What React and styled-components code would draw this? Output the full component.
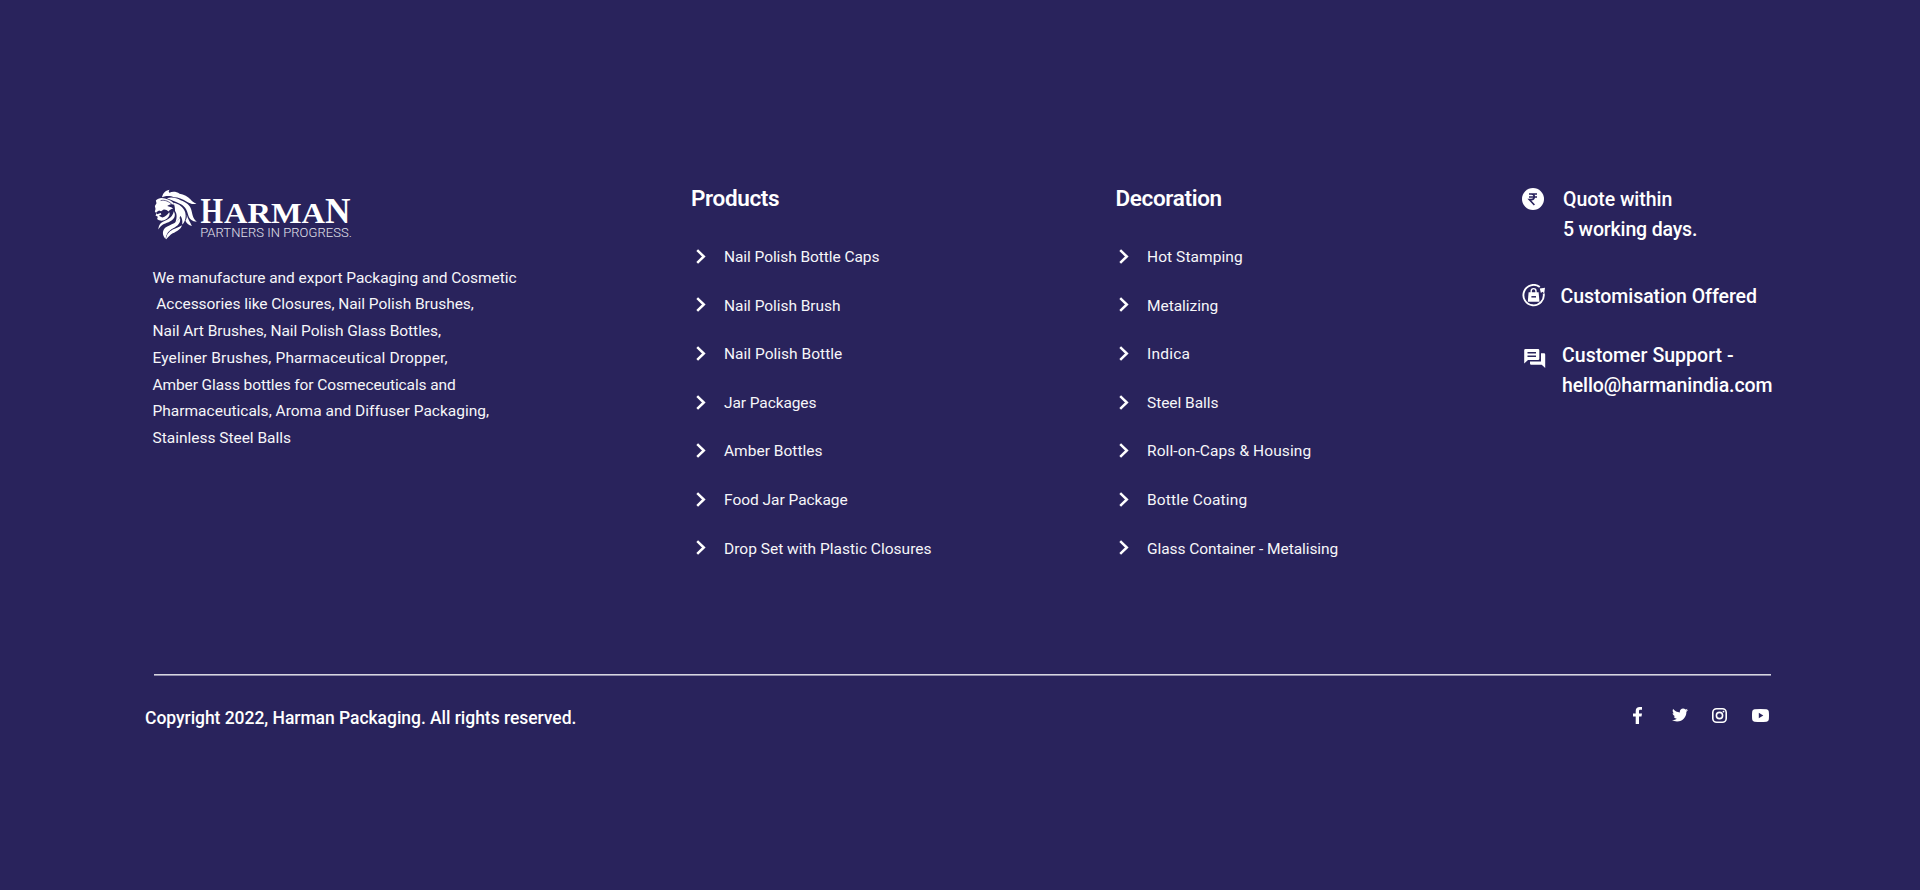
import React from "react";
import styled, { createGlobalStyle } from "styled-components";
import { FaTwitter } from "react-icons/fa";

const NAVY = "#29235c";

const GlobalStyle = createGlobalStyle`
  * { box-sizing: border-box; }
  html, body { margin: 0; padding: 0; background: ${NAVY}; }
`;

const Footer = styled.footer`
  width: 1920px;
  height: 890px;
  padding: 184px 148px 0 145px;
  background: ${NAVY};
  color: #fff;
  font-family: Roboto, "Liberation Sans", sans-serif;
  overflow: hidden;
`;

const Columns = styled.div`
  display: grid;
  grid-template-columns: 538.500px 424.500px 406.500px 1fr;
  height: 490px;
  padding-left: 7.500px;
`;

const Brand = styled.section`
  padding-top: 4px;
`;

const LogoArt = styled.svg`
  display: block;
  width: 200px;
  height: 54px;
`;

const About = styled.p`
  margin: 22.700px 0 0;
  font-size: 15.5px;
  line-height: 26.7px;
  color: #f6f6f9;
`;

const Line = styled.span`
  display: block;
  white-space: pre;
  letter-spacing: ${(p) => p.$track || 0}px;
`;

const Heading = styled.h2`
  margin: 0 0 20px;
  font-size: 22.5px;
  font-weight: 600;
  line-height: 28px;
  letter-spacing: -0.35px;
`;

const Links = styled.ul`
  margin: 0;
  padding: 0 0 0 ${(p) => p.$indent}px;
  list-style: none;
`;

const LinkRow = styled.li`
  display: flex;
  align-items: center;
  gap: 18.500px;
  height: 48.6px;
  font-size: 15.5px;
  line-height: 20px;
  color: #f6f6f9;

  ${Line} {
    padding-top: 1.500px;
  }
`;

const Chevron = styled.svg`
  width: 10px;
  height: 15px;
  flex: none;
`;

const Contact = styled.section`
  display: flex;
  flex-direction: column;
  padding-top: 1px;
`;

const ContactRow = styled.div`
  display: flex;
  align-items: flex-start;
  margin-bottom: ${(p) => p.$after || 0}px;
  font-size: 19.5px;
  font-weight: 500;
  line-height: 30px;
`;

const ContactIcon = styled.svg`
  width: 24px;
  height: 24px;
  flex: none;
  margin: ${(p) => p.$top}px ${(p) => p.$right}px 0 0;
`;

const Divider = styled.hr`
  height: 2px;
  margin: 0 0 0 9px;
  width: 1617px;
  border: 0;
  border-top: 1px solid #d6d5df;
  border-bottom: 1px solid #8e8bab;
`;

const Bottom = styled.div`
  display: flex;
  align-items: flex-start;
  justify-content: space-between;
`;

const Copyright = styled.p`
  margin: 28px 0 0;
  font-size: 17.5px;
  font-weight: 500;
  line-height: 28px;
  letter-spacing: -0.042px;
`;

const Social = styled.nav`
  display: flex;
  align-items: center;
  height: 18px;
  margin: 30px 3px 0 0;
`;

const SocialLink = styled.a`
  display: flex;
  color: #fff;
  margin-left: ${(p) => p.$gap}px;
`;

const aboutLines = [
  ["We manufacture and export Packaging and Cosmetic", -0.048],
  [" Accessories like Closures, Nail Polish Brushes,", -0.049],
  ["Nail Art Brushes, Nail Polish Glass Bottles,", -0.039],
  ["Eyeliner Brushes, Pharmaceutical Dropper,", 0.136],
  ["Amber Glass bottles for Cosmeceuticals and", -0.104],
  ["Pharmaceuticals, Aroma and Diffuser Packaging,", 0.005],
  ["Stainless Steel Balls", -0.016],
];

const products = [
  ["Nail Polish Bottle Caps", -0.068],
  ["Nail Polish Brush", -0.048],
  ["Nail Polish Bottle", 0.017],
  ["Jar Packages", -0.094],
  ["Amber Bottles", 0.012],
  ["Food Jar Package", -0.032],
  ["Drop Set with Plastic Closures", 0.01],
];

const decoration = [
  ["Hot Stamping", 0.078],
  ["Metalizing", -0.034],
  ["Indica", 0.22],
  ["Steel Balls", -0.045],
  ["Roll-on-Caps & Housing", 0.109],
  ["Bottle Coating", 0.175],
  ["Glass Container - Metalising", -0.074],
];

function Logo() {
  return (
    <LogoArt viewBox="0 0 200 54" role="img" aria-label="Harman">
      <g transform="translate(-1.700 -.8) scale(.32500)" fill="#fff">
        <path d="M33 31C35 20 42 11 56 8C53 13 53 16 56 17C64 13 77 13 87 20C100 23 113 28 121 38C126 44 132 49 139 51C128 54 117 50 108 44C96 36 83 31 70 31C60 27 48 25 33 31Z" />
        <path d="M48 34C62 29 78 33 90 40C108 47 119 54 123 69C127 84 128 97 140 106C126 106 116 98 113 84C110 68 101 56 86 50C73 44 61 40 48 34Z" />
        <path d="M14 41C20 34 31 31 42 35C56 38 66 44 72 54C64 51 56 52 49 58C55 60 62 61 67 66C60 67 56 70 53 75C49 71 43 68 37 69L30 74L24 72L15 77L18 83L29 79L31 84L23 88L34 93C43 91 50 84 55 77C59 83 54 93 46 98C37 105 24 104 18 98L20 91L13 87L16 81L11 75L13 67L11 58L16 49Z" />
        <path d="M68 48C85 51 99 62 104 76C108 91 105 105 95 115C97 102 94 93 89 88C88 96 82 105 73 111C79 97 80 82 73 73C73 64 72 56 68 48Z" />
        <path d="M69 74C78 88 69 101 53 108C39 113 29 117 22 130C22 116 29 108 42 103C57 97 67 88 69 74Z" />
        <path d="M88 94C92 108 83 119 66 127C55 133 46 142 44 159C35 151 33 137 40 128C48 117 77 114 88 94Z" />
        <path d="M94 117C92 129 78 136 66 142C57 147 54 153 45 161C46 146 54 137 66 130C77 126 86 123 94 117Z" />
        <path d="M109 84C112 97 119 107 125 119C115 117 108 110 105 103C109 97 110 91 109 84Z" />
      </g>
      <path d="M8 12.500c4-1 8 1 11 4" stroke={NAVY} strokeWidth=".7" fill="none" strokeLinecap="round" />
      <g fill="#fff" fontFamily='"Liberation Serif", serif' fontWeight="700">
        <text x="47.500" y="34.700" fontSize="35.500" textLength="22.500" lengthAdjust="spacingAndGlyphs">H</text>
        <text x="71" y="34.700" fontSize="30" textLength="101" lengthAdjust="spacingAndGlyphs">ARMA</text>
        <text x="172" y="34.700" fontSize="35.500" textLength="25.500" lengthAdjust="spacingAndGlyphs">N</text>
      </g>
      <text x="47.200" y="49.200" fontSize="13" fontWeight="300" fill="#e4e3ec" letterSpacing=".054" fontFamily="Roboto, sans-serif">
        PARTNERS IN PROGRESS.
      </text>
    </LogoArt>
  );
}

function LinkColumn({ title, items, indent }) {
  return (
    <section>
      <Heading>{title}</Heading>
      <Links $indent={indent}>
        {items.map(([label, track]) => (
          <LinkRow key={label}>
            <Chevron viewBox="0 0 10 15">
              <path d="M1.2 1.2L7.8 7.5L1.2 13.8" fill="none" stroke="#fff" strokeWidth="2.5" />
            </Chevron>
            <Line $track={track}>{label}</Line>
          </LinkRow>
        ))}
      </Links>
    </section>
  );
}

export default function App() {
  return (
    <>
      <GlobalStyle />
      <Footer>
        <Columns>
          <Brand>
            <Logo />
            <About>
              {aboutLines.map(([text, track]) => (
                <Line key={text} $track={track}>{text}</Line>
              ))}
            </About>
          </Brand>
          <LinkColumn title="Products" items={products} indent={4.5} />
          <LinkColumn title="Decoration" items={decoration} indent={3} />
          <Contact>
            <ContactRow $after={37}>
              <ContactIcon viewBox="0 0 24 24" $top={3} $right={17}>
                <circle cx="11" cy="11" r="11" fill="#fff" />
                <path d="M7 6h8M7 9h8M7 6h2.3c4 0 4 5.6 0 5.6H7.3L12.4 17" fill="none" stroke={NAVY} strokeWidth="1.6" />
              </ContactIcon>
              <div>
                <Line $track={-0.034}>Quote within</Line>
                <Line $track={-0.157}>5 working days.</Line>
              </div>
            </ContactRow>
            <ContactRow $after={29}>
              <ContactIcon viewBox="0 0 24 24" $top={2} $right={14.5}>
                <path d="M17.8 3A10.2 10.2 0 1 0 21.7 9.5" fill="none" stroke="#fff" strokeWidth="1.9" />
                <path d="M17.8 4.6L23 3.8L22.2 9.6L20.5 7.8L18.9 9z" fill="#fff" />
                <path d="M6.6 8.3h10l.9 9.500H5.8z" fill="#fff" />
                <path d="M9.2 9.5V7a2.4 2.4 0 0 1 4.8 0v2.5" fill="none" stroke="#fff" strokeWidth="1.4" />
                <path d="M9.4 12.8h4.6" stroke={NAVY} strokeWidth="1.5" />
              </ContactIcon>
              <Line $track={-0.038}>Customisation Offered</Line>
            </ContactRow>
            <ContactRow>
              <ContactIcon viewBox="0 0 24 24" $top={7} $right={16}>
                <path d="M3.500 1h12.500a1.300 1.300 0 0 1 1.300 1.300v8.400A1.300 1.300 0 0 1 16 12H6l-3.800 3.600V2.300A1.300 1.300 0 0 1 3.500 1z" fill="#fff" />
                <path d="M5.500 4.700h8.500M5.500 8.200h8.500" stroke={NAVY} strokeWidth="1.4" />
                <path d="M19 5.300h3a1.200 1.200 0 0 1 1.200 1.200V20l-3.500-3.200H9.200A1.200 1.200 0 0 1 8 15.600V13.600h11z" fill="#fff" />
              </ContactIcon>
              <div>
                <Line $track={0.032}>Customer Support -</Line>
                <Line $track={-0.091}>hello@harmanindia.com</Line>
              </div>
            </ContactRow>
          </Contact>
        </Columns>
        <Divider />
        <Bottom>
          <Copyright>Copyright 2022, Harman Packaging. All rights reserved.</Copyright>
          <Social>
            <SocialLink $gap={0} aria-label="Facebook">
              <svg width="9" height="17" viewBox="0 0 9 17">
                <path fill="#fff" d="M2.700 17V9.600H0V6.500h2.700V4.100C2.700 1.400 4.200 0 6.700 0H9v2.800H7.400C6.300 2.800 6 3.300 6 4.300v2.200h3L8.500 9.600H6V17z" />
              </svg>
            </SocialLink>
            <SocialLink $gap={30} aria-label="Twitter"><FaTwitter size={16} /></SocialLink>
            <SocialLink $gap={24} aria-label="Instagram">
              <svg width="15" height="15" viewBox="0 0 15 15" fill="none" stroke="#fff">
                <rect x=".8" y=".8" width="13.400" height="13.400" rx="3.800" strokeWidth="1.600" />
                <circle cx="7.500" cy="7.500" r="3.100" strokeWidth="1.600" />
                <circle cx="11.500" cy="3.600" r=".9" fill="#fff" stroke="none" />
              </svg>
            </SocialLink>
            <SocialLink $gap={25} aria-label="YouTube">
              <svg width="17" height="13" viewBox="0 0 17 13">
                <path fill="#fff" d="M2.500.3Q8.500-.3 14.500.3Q16.600.5 16.800 2.500Q17.200 6.500 16.800 10.500Q16.600 12.500 14.500 12.700Q8.500 13.300 2.500 12.700Q.4 12.500.2 10.500Q-.2 6.500.2 2.500Q.4.5 2.500.3Z" />
                <path fill={NAVY} d="M6.800 3.800L11.300 6.500L6.800 9.200z" />
              </svg>
            </SocialLink>
          </Social>
        </Bottom>
      </Footer>
    </>
  );
}
